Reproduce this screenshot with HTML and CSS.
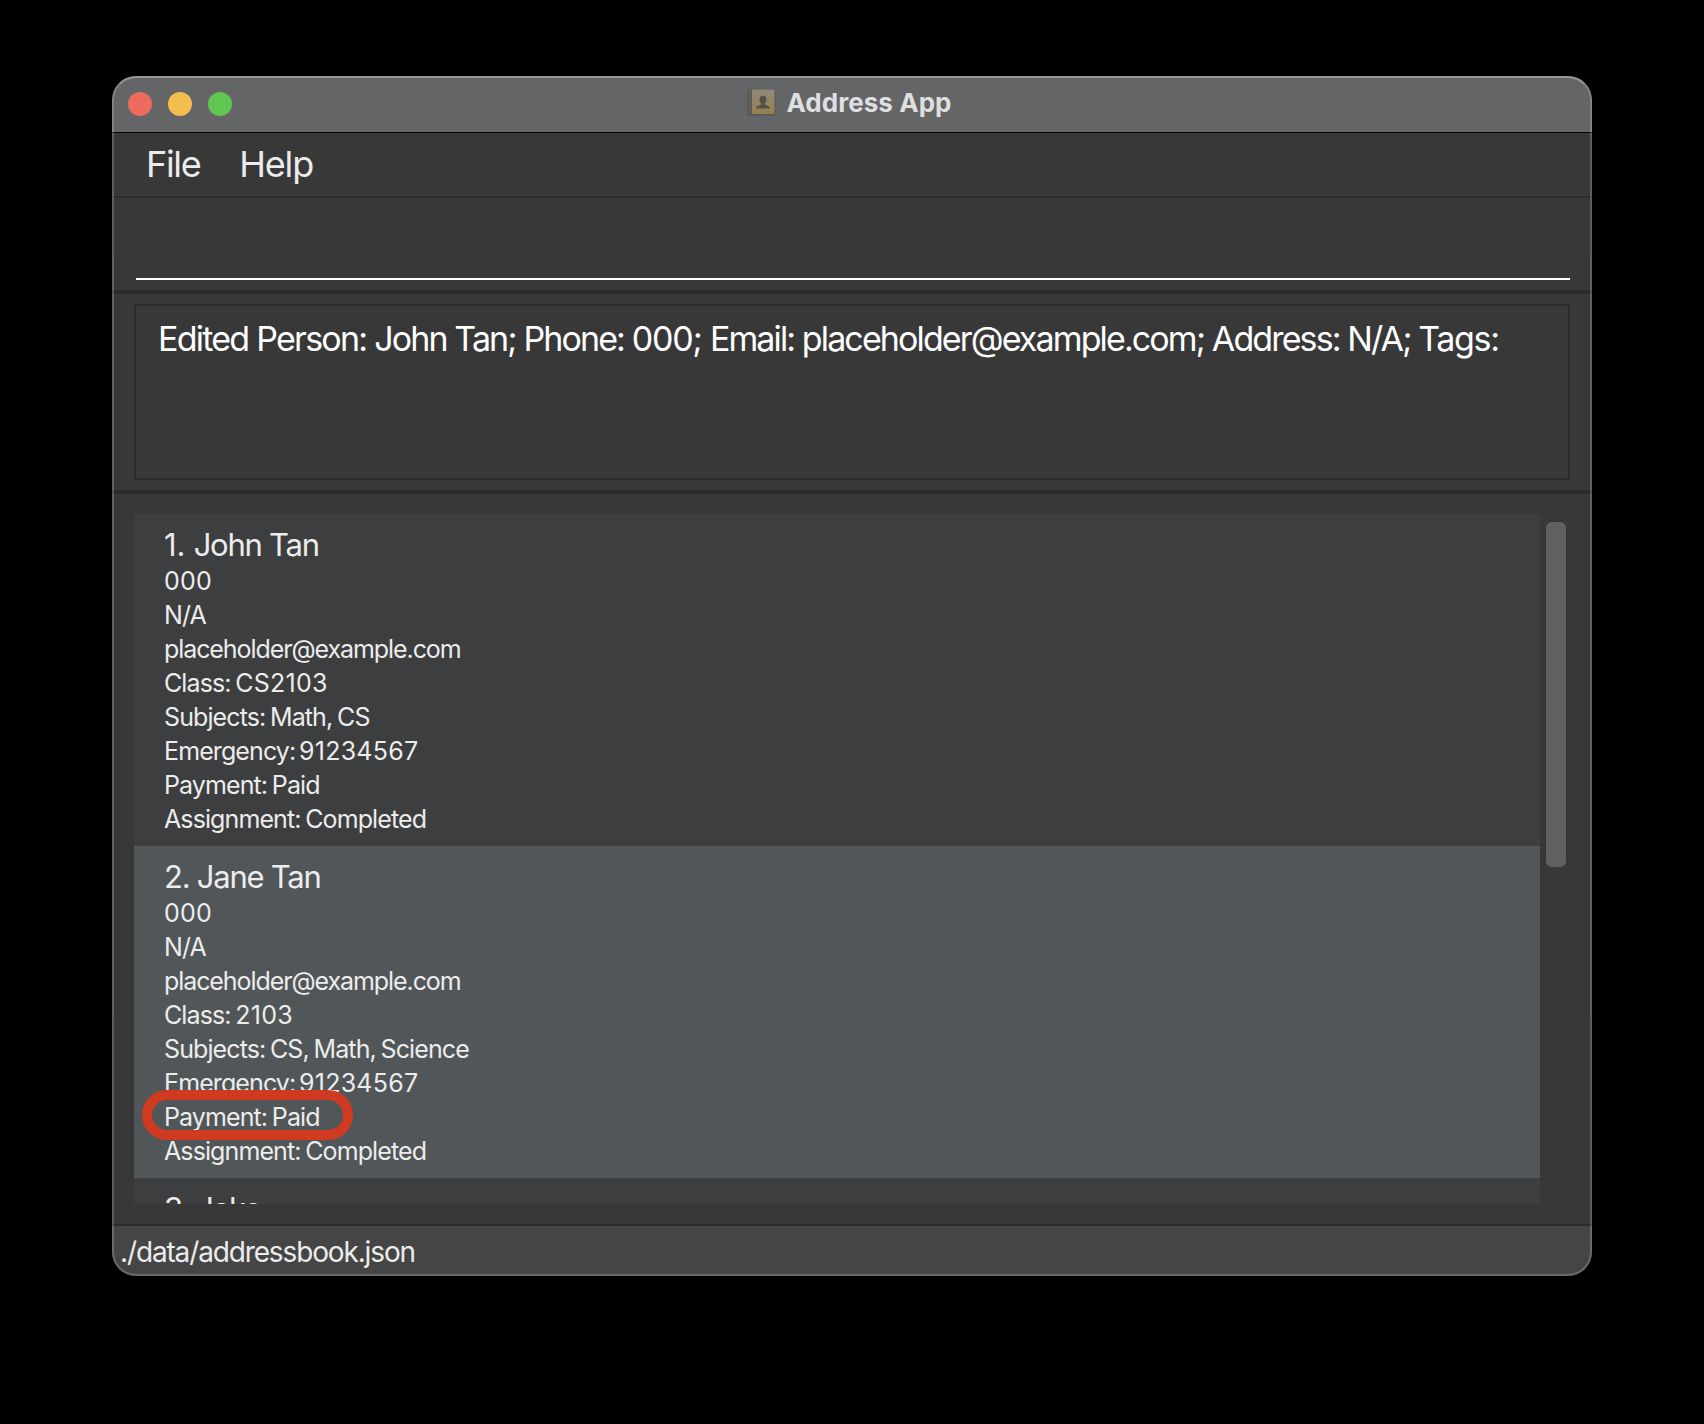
FILE: index.html
```html
<!DOCTYPE html>
<html lang="en">
<head>
<meta charset="utf-8">
<title>Address App</title>
<link rel="stylesheet" href="styles.css">
</head>
<body>
<div class="window">
  <header class="titlebar">
    <div class="lights"><i class="close"></i><i class="minimize"></i><i class="maximize"></i></div>
    <svg class="book" width="30" height="30" viewBox="0 0 30 30">
      <defs><linearGradient id="cover" x1="0" y1="0" x2="0" y2="1"><stop offset="0" stop-color="#91897b"/><stop offset="1" stop-color="#94804f"/></linearGradient></defs>
      <rect x="0" y="3" width="28.500" height="26" rx="2" fill="#515151" opacity=".5"/>
      <rect x="0.500" y="2" width="27.500" height="25.500" rx="1.5" fill="#5a5652"/>
      <rect x="5" y="2.5" width="22.5" height="24.500" rx="1" fill="url(#cover)"/>
      <path d="M3 3v23.500" stroke="#6d6861" stroke-width="1"/>
      <path d="M9 21.5c0-2.600 2.500-2.800 4.300-3.600 1-.45.9-1.700.3-2.500-.9-1.200-1.200-2.400-1.100-3.700.1-2 1.500-3 3.500-3s3.400 1 3.500 3c.1 1.300-.2 2.500-1.100 3.700-.6.8-.7 2.050.3 2.500 1.800.8 4.300 1 4.300 3.600z" fill="#555044"/>
    </svg>
    <span class="title">Address App</span>
  </header>
  <nav class="menu"><span class="file">File</span><span>Help</span></nav>
  <section class="command"><div class="input"></div></section>
  <section class="result"><div class="message"><span class="lead">Edited Person: </span>John Tan; Phone: <span class="num">000; </span>Email: placeholder@example.com; Address: N/A; <span class="tail">Tags:</span></div></section>
  <section class="people">
    <div class="list">
      <article class="person first">
        <h2><span class="index">1. </span>John Tan</h2>
        <p class="num">000</p>
        <p>N/A</p>
        <p class="mail">placeholder@example.com</p>
        <p>Class: <span class="num">CS2103</span></p>
        <p>Subjects: Math, CS</p>
        <p>Emergency: <span class="num phone">91234567</span></p>
        <p>Payment: Paid</p>
        <p>Assignment: Completed</p>
      </article>
      <article class="person alt">
        <h2>2. Jane Tan</h2>
        <p class="num">000</p>
        <p>N/A</p>
        <p class="mail">placeholder@example.com</p>
        <p>Class: <span class="num">2103</span></p>
        <p>Subjects: CS, Math, Science</p>
        <p>Emergency: <span class="num phone">91234567</span></p>
        <p class="marked">Payment: Paid</p>
        <p>Assignment: Completed</p>
      </article>
      <article class="person">
        <h2>3. Jake</h2>
      </article>
    </div>
    <div class="scrollbar"></div>
  </section>
  <footer class="status">./data/addressbook.json</footer>
</div>
</body>
</html>
```
FILE: styles.css
```css
*, *::before, *::after { box-sizing: border-box; }
body {
  margin: 0;
  padding: 76px 112px 0;
  height: 1424px;
  background: #000;
  color: #ececec;
  font-family: Inter, "Liberation Sans", sans-serif;
  overflow: hidden;
}
.window {
  position: relative;
  display: flex;
  flex-direction: column;
  height: 1200px;
  border-radius: 24px;
  overflow: hidden;
  background: #383838;
}
/* translucent rim over the window edge */
.window::after {
  content: "";
  position: absolute;
  inset: 0;
  border: 2px solid rgba(255, 255, 255, .2);
  border-top-color: rgba(255, 255, 255, .33);
  border-radius: 24px;
}
.titlebar {
  position: relative;
  display: flex;
  justify-content: center;
  height: 57px;
  padding-right: 5px;
  background: #646567;
  border-bottom: 1px solid #000;
}
.lights {
  position: absolute;
  left: 16px;
  top: 16px;
  display: flex;
  gap: 16px;
}
.lights i { width: 24px; height: 24px; border-radius: 50%; }
.close { background: #ed6a5e; }
.minimize { background: #f5bf4f; }
.maximize { background: #61c554; }
.book { margin: 11px 9px 0 0; }
.title {
  font-size: 26px;
  font-weight: 700;
  line-height: 53px;
  letter-spacing: .05px;
  color: #dfdfe0;
}
.menu {
  display: flex;
  gap: 39px;
  height: 65px;
  padding-left: 34px;
  border-bottom: 2px solid #2b2b2b;
  font-size: 36px;
  line-height: 62px;
  letter-spacing: -1.2px;
}
.file { letter-spacing: -1.35px; }
.command {
  height: 96px;
  padding: 0 22px 0 24px;
  border-bottom: 4px solid #2b2b2b;
}
.input { height: 82px; border-bottom: 2px solid #fff; }
.result {
  height: 200px;
  padding: 10px 22px;
  border-bottom: 4px solid #2b2b2b;
}
.message {
  height: 176px;
  padding: 12px 0 0 22px;
  border: 2px solid #2b2b2b;
  color: #fff;
  font-size: 34px;
  line-height: 42px;
  letter-spacing: -1.88px;
  white-space: nowrap;
}
.message .lead { letter-spacing: -1.75px; }
.message .num { letter-spacing: -1.2px; }
.message .tail { letter-spacing: -1.35px; }
.people {
  display: flex;
  gap: 6px;
  height: 730px;
  padding: 20px 22px;
}
.list { width: 1406px; height: 690px; overflow: hidden; }
.person {
  height: 332px;
  padding: 11px 0 0 30px;
  background: #3c3e3f;
}
.person.alt { background: #515658; }
h2, p { margin: 0; font-weight: 400; white-space: nowrap; }
h2 { font-size: 31px; line-height: 39px; letter-spacing: -1.25px; }
.index { letter-spacing: -.2px; }
p {
  position: relative;
  font-size: 25px;
  line-height: 34px;
  letter-spacing: -.9px;
  word-spacing: -1.4px;
}
.mail { letter-spacing: -1.08px; }
.person .num { letter-spacing: .25px; }
.phone { margin-left: -1px; }
.marked { z-index: 1; }
/* annotation ring over the payment line */
.marked::after {
  content: "";
  position: absolute;
  left: -22px;
  top: -10px;
  width: 211px;
  height: 50px;
  border: 10px solid #cf3a20;
  border-radius: 25px;
}
.scrollbar {
  width: 20px;
  height: 345px;
  margin-top: 8px;
  border-radius: 6px;
  background: #606060;
}
.status {
  height: 52px;
  padding-left: 8px;
  background: #454545;
  border-top: 2px solid #2b2b2b;
  font-size: 28px;
  line-height: 52px;
  letter-spacing: -1.14px;
}
```
